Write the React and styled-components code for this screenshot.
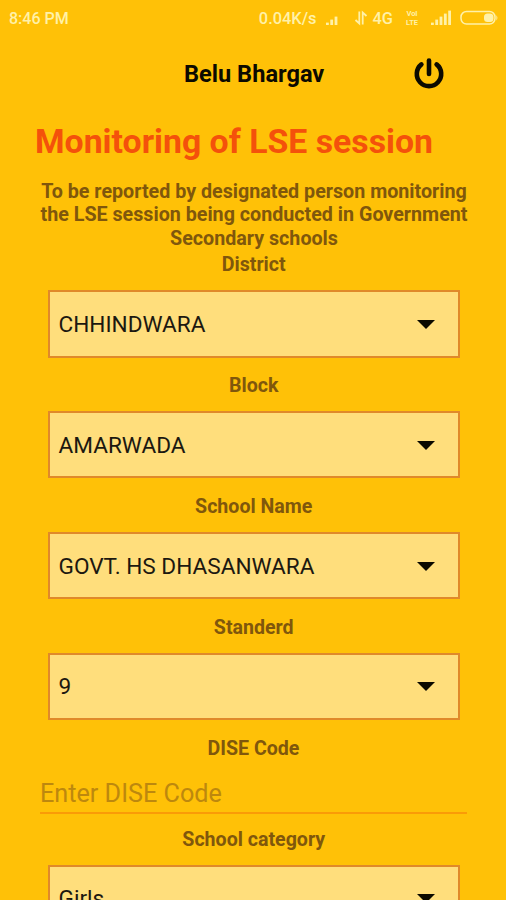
import { useState } from "react";
import styled, { createGlobalStyle } from "styled-components";

const fields = [
  { label: "District", value: "CHHINDWARA" },
  { label: "Block", value: "AMARWADA" },
  { label: "School Name", value: "GOVT. HS DHASANWARA" },
  { label: "Standerd", value: "9" },
];

function Spinner({ label, value }) {
  return (
    <Field>
      <Label>{label}</Label>
      <SelectBox>
        <SelectValue>{value}</SelectValue>
        <Arrow />
      </SelectBox>
    </Field>
  );
}

function SignalIcon({ bars }) {
  return (
    <svg width="21" height="16" viewBox="0 0 21 16" fill="currentColor">
      {[0, 1, 2, 3, 4].slice(0, bars).map((i) => (
        <rect
          key={i}
          x={i * 4.3}
          y={12.6 - i * 3}
          width="2.8"
          height={2.4 + i * 3}
        />
      ))}
    </svg>
  );
}

function DataIcon() {
  return (
    <svg
      width="14"
      height="16"
      viewBox="0 0 14 16"
      fill="none"
      stroke="currentColor"
      strokeWidth="1.8"
    >
      <path d="M5.3 1.5v12L1.5 10M8.7 14.5v-12L12.5 6" />
    </svg>
  );
}

function BatteryIcon() {
  return (
    <svg width="39" height="16" viewBox="0 0 39 16">
      <rect
        x="1"
        y="1.5"
        width="34"
        height="12.6"
        rx="5.5"
        fill="none"
        stroke="currentColor"
        strokeWidth="1.5"
      />
      <rect x="24" y="3.6" width="9.5" height="8.5" rx="3.5" fill="currentColor" />
      <path d="M36.4 5.2q2 2.6 0 5.2z" fill="currentColor" />
    </svg>
  );
}

function PowerIcon() {
  return (
    <svg
      width="30"
      height="31"
      viewBox="0 0 30 31"
      fill="none"
      stroke="#0c0a00"
      strokeWidth="4.6"
      strokeLinecap="round"
    >
      <path d="M15 2.6v13.4" />
      <path d="M7.4 6.4A12.2 12.2 0 1 0 22.6 6.4" />
    </svg>
  );
}

export default function App() {
  const [code, setCode] = useState("");

  return (
    <Screen>
      <GlobalStyle />
      <StatusBar>
        <Time>8:46 PM</Time>
        <Speed>0.04K/s</Speed>
        <FirstSignal>
          <SignalIcon bars={3} />
        </FirstSignal>
        <DataIcon />
        <Network>4G</Network>
        <Volte>
          <span>VoI</span>
          <span>LTE</span>
        </Volte>
        <SignalIcon bars={5} />
        <Battery>
          <BatteryIcon />
        </Battery>
      </StatusBar>

      <Header>
        <UserName>Belu Bhargav</UserName>
        <PowerButton aria-label="Log out">
          <PowerIcon />
        </PowerButton>
      </Header>

      <Title>Monitoring of LSE session</Title>
      <Description>
        To be reported by designated person monitoring
        <br />
        the LSE session being conducted in Government
        <br />
        Secondary schools
      </Description>

      <Form>
        {fields.map((field) => (
          <Spinner key={field.label} {...field} />
        ))}
        <InputField>
          <Label>DISE Code</Label>
          <CodeInput
            placeholder="Enter DISE Code"
            value={code}
            onChange={(e) => setCode(e.target.value)}
          />
        </InputField>
        <Spinner label="School category" value="Girls" />
      </Form>
    </Screen>
  );
}

const GlobalStyle = createGlobalStyle`
  * {
    box-sizing: border-box;
  }
  body {
    margin: 0;
    background: #ffc107;
    overflow: hidden;
  }
`;

const Screen = styled.div`
  width: 506px;
  height: 900px;
  overflow: hidden;
  display: flex;
  flex-direction: column;
  background: #ffc107;
  font-family: Roboto, "Liberation Sans", sans-serif;
`;

const StatusBar = styled.div`
  flex: none;
  height: 36px;
  padding: 0 7px 0 9px;
  display: flex;
  align-items: center;
  color: #fff1a8;
  font-size: 16px;
  font-weight: 500;
`;

const Time = styled.span`
  flex: 1;
`;

const Speed = styled.span`
  margin-right: 9px;
  font-size: 16.4px;
`;

const FirstSignal = styled.span`
  display: flex;
  width: 28px;
`;

const Network = styled.span`
  margin: 0 10px 0 5px;
  font-size: 16.4px;
`;

const Volte = styled.span`
  width: 18px;
  margin-right: 10px;
  display: flex;
  flex-direction: column;
  align-items: center;
  font-size: 7.5px;
  font-weight: 700;
  line-height: 9px;
`;

const Battery = styled.span`
  display: flex;
  margin-left: 8px;
`;

const Header = styled.header`
  flex: none;
  height: 75px;
  padding: 0 62px 0 184px;
  display: flex;
  align-items: center;
  justify-content: space-between;
`;

const UserName = styled.span`
  padding-top: 1px;
  font-size: 23.6px;
  font-weight: 700;
  color: #0c0a00;
`;

const PowerButton = styled.button`
  display: flex;
  padding: 0;
  border: 0;
  background: none;
`;

const Title = styled.h1`
  flex: none;
  margin: 0;
  padding-left: 35px;
  height: 69px;
  line-height: 62px;
  font-size: 33.8px;
  font-weight: 700;
  color: #f4510b;
  white-space: nowrap;
`;

const Description = styled.p`
  flex: none;
  margin: 0;
  padding-left: 2px;
  height: 73px;
  line-height: 23.4px;
  font-size: 19.7px;
  font-weight: 700;
  color: #80570c;
  text-align: center;
  white-space: nowrap;
`;

const Form = styled.div`
  flex: none;
  display: flex;
  flex-direction: column;
`;

const Field = styled.div`
  height: 120.9px;
  padding: 0 46px 0 47.5px;
`;

const Label = styled.div`
  height: 24px;
  line-height: 24px;
  font-size: 19.6px;
  font-weight: 700;
  color: #80570c;
  text-align: center;
`;

const SelectBox = styled.div`
  margin-top: 13px;
  height: 67.6px;
  padding: 1px 23px 0 9px;
  display: flex;
  align-items: center;
  justify-content: space-between;
  background: #ffde7c;
  border: 2px solid #e0892a;
`;

const SelectValue = styled.span`
  font-size: 22.6px;
  color: #1c1810;
`;

const Arrow = styled.span`
  border: 9px solid transparent;
  border-top-color: #0c0a00;
  border-bottom: 0;
`;

const InputField = styled.div`
  height: 91px;
  padding: 0 39px 0 40px;
`;

const CodeInput = styled.input`
  display: block;
  width: 100%;
  height: 53.5px;
  padding: 18px 0 4px;
  border: 0;
  border-bottom: 2px solid #fa9b07;
  outline: none;
  background: none;
  font-family: inherit;
  font-size: 25.2px;

  &::placeholder {
    color: #bd880e;
    opacity: 1;
  }
`;
